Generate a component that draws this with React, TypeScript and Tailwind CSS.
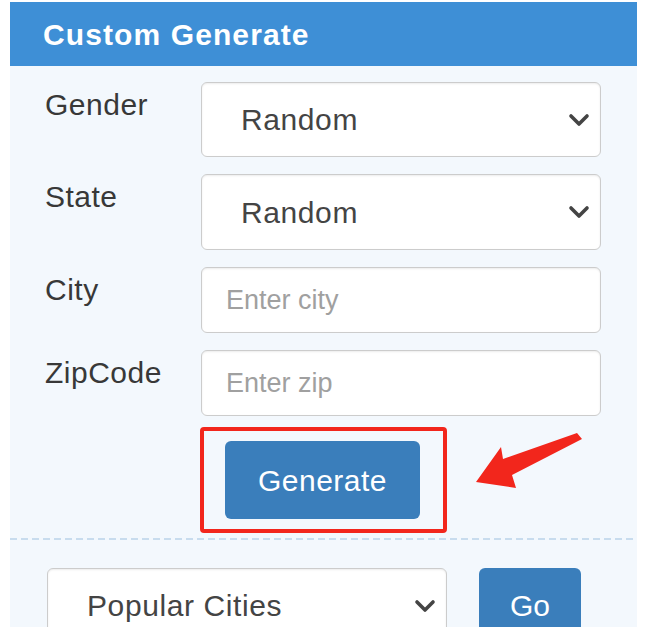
import React from 'react';

const FONT = { fontFamily: '"Liberation Sans", Arial, sans-serif' };

// bold chevron used by the custom selects
const Chevron = () => (
  <svg width="22" height="14" viewBox="0 0 22 14" className="pointer-events-none absolute right-[11px] top-1/2 -translate-y-1/2">
    <path d="M3 3 L11 11 L19 3" fill="none" stroke="#444" strokeWidth="3.6" strokeLinecap="round" strokeLinejoin="round" />
  </svg>
);

const SelectBox = ({ value, className }: { value: string; className: string }) => (
  <div className={`relative ${className}`}>
    <select
      defaultValue={value}
      className="h-full w-full appearance-none rounded-[6px] border border-[#cccccc] bg-white pl-[39px] pr-10 text-[30px] tracking-[0.6px] text-[#444] shadow-[inset_0_1px_2px_rgba(0,0,0,0.08)] outline-none"
    >
      <option>{value}</option>
    </select>
    <Chevron />
  </div>
);

const Field = ({ label, children }: { label: string; children: React.ReactNode }) => (
  <div className="flex">
    <label className="w-[156px] shrink-0 pt-[6px] text-[30px] leading-[34px] tracking-[0.5px] text-[#383838]">{label}</label>
    {children}
  </div>
);

export default function App() {
  return (
    <div className="relative h-[637px] w-[649px] bg-white pl-[10px] pt-[2px]" style={FONT}>
      <div className="h-[625px] w-[627px] overflow-hidden bg-[#f3f8fd]">
        {/* header */}
        <div className="flex h-[64px] items-center bg-[#3e8fd6] pl-[33px] text-[30px] font-bold tracking-[1.1px] text-white">
          Custom Generate
        </div>

        {/* custom form */}
        <div className="flex flex-col gap-[17px] pl-[35px] pt-[16px]">
          <Field label="Gender">
            <SelectBox value="Random" className="h-[75px] w-[400px]" />
          </Field>
          <Field label="State">
            <SelectBox value="Random" className="h-[76px] w-[400px]" />
          </Field>
          <Field label="City">
            <input
              placeholder="Enter city"
              className="h-[66px] w-[400px] rounded-[6px] border border-[#cccccc] bg-white pl-[24px] text-[27px] text-[#444] shadow-[inset_0_1px_2px_rgba(0,0,0,0.08)] outline-none placeholder:text-[#a0a0a0]"
            />
          </Field>
          <Field label="ZipCode">
            <input
              placeholder="Enter zip"
              className="h-[66px] w-[400px] rounded-[6px] border border-[#cccccc] bg-white pl-[24px] text-[27px] text-[#444] shadow-[inset_0_1px_2px_rgba(0,0,0,0.08)] outline-none placeholder:text-[#a0a0a0]"
            />
          </Field>
        </div>

        {/* highlighted generate button */}
        <div className="ml-[190px] mt-[11px] w-[247px] rounded-[4px] border-4 border-[#f2261c] py-[10px] pl-[21px] pr-[23px]">
          <button className="h-[78px] w-[195px] rounded-[6px] bg-[#3a7ebb] text-[30px] tracking-[0.5px] text-white">
            Generate
          </button>
        </div>

        <div className="mt-[5px] h-[2px] bg-[repeating-linear-gradient(90deg,#c8dcee_0_7px,transparent_7px_11px)]" />

        {/* popular cities */}
        <div className="flex gap-[32px] pl-[37px] pt-[28px]">
          <SelectBox value="Popular Cities" className="h-[75px] w-[400px]" />
          <button className="h-[75px] w-[102px] rounded-[6px] bg-[#3a7ebb] text-[30px] text-white">Go</button>
        </div>
      </div>

      {/* annotation arrow */}
      <svg className="absolute left-0 top-0" width="649" height="637" viewBox="0 0 649 637">
        <polygon points="476,482 501,447 503,459 577,433 582,439 512,475 516,488" fill="#f2261c" />
      </svg>
    </div>
  );
}
